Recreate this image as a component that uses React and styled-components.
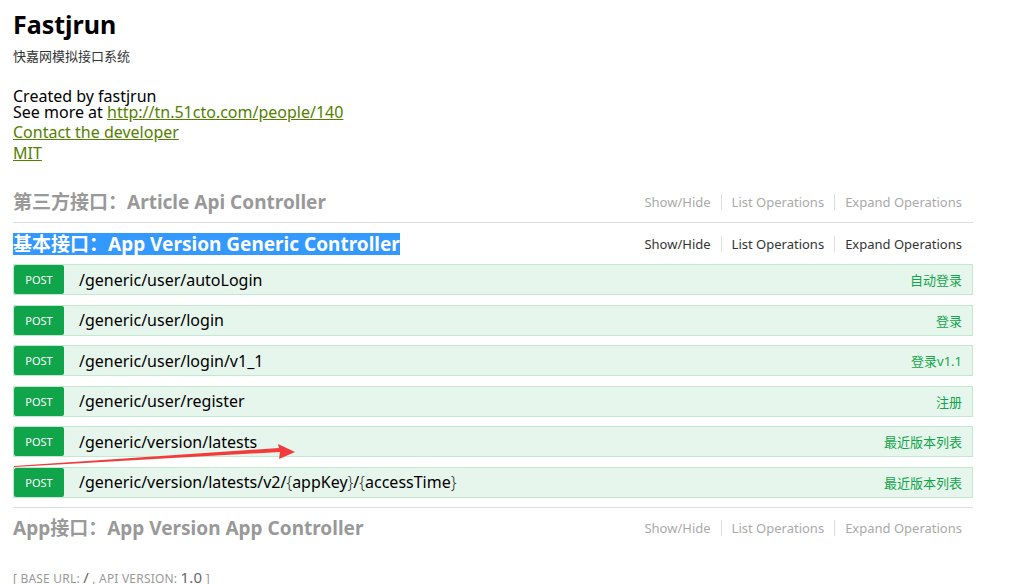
import styled, { createGlobalStyle } from "styled-components";

const GlobalStyle = createGlobalStyle`
    body {
        margin: 0;
        background: #fff;
        font-family: "Noto Sans", "Noto Sans CJK SC", sans-serif;
        color: #000;
    }
`;

const Page = styled.div`
    position: relative;
    width: 960px;
    padding: 6px 0 0 13px;
`;

const Title = styled.h1`
    margin: 0;
    font-size: 25px;
    line-height: 36px;
    font-weight: 700;
`;

const Subtitle = styled.div`
    font-size: 13px;
    line-height: 18px;
    color: #333;
    margin-top: 5px;
`;

const Info = styled.div`
    margin-top: 23px;
    font-size: 16px;
    line-height: 16px;
`;

const Link = styled.a`
    display: block;
    color: #547f00;
    text-decoration: underline;
    font-size: 16px;
    line-height: 21px;
    ${(p) => p.$inline && "display: inline; line-height: 16px;"}
    ${(p) => p.$first && "margin-top: 2px;"}
`;

const Section = styled.div`
    margin-top: ${(p) => p.$top || 0}px;
    border-bottom: ${(p) => (p.$open ? "none" : "1px solid #ddd")};
`;

const Heading = styled.div`
    display: flex;
    align-items: center;
    justify-content: space-between;
    height: 41px;
`;

const HeadingText = styled.span`
    font-size: 19px;
    font-weight: 700;
    color: ${(p) => (p.$selected ? "#fff" : "#999")};
    background: ${(p) => (p.$selected ? "#3399ff" : "transparent")};
    line-height: 22px;
`;

const Ops = styled.div`
    display: flex;
    align-items: center;
    padding-right: 11px;
    font-size: 13px;
    color: ${(p) => (p.$dark ? "#333" : "#aaa")};
`;

const Op = styled.span`
    padding: 0 10px;
    border-left: 1px solid #ddd;
    line-height: 16px;
    &:first-child {
        border-left: none;
        padding-left: 0;
    }
    &:last-child {
        padding-right: 0;
    }
`;

const OpList = styled.div`
    display: flex;
    flex-direction: column;
    gap: 9.5px;
    padding-bottom: 9px;
    border-bottom: 1px solid #ddd;
`;

const Row = styled.div`
    display: flex;
    align-items: center;
    height: 31px;
    background: #e7f6ec;
    border: 1px solid #c3e8d1;
    box-sizing: border-box;
    width: 960px;
`;

const Badge = styled.span`
    width: 50px;
    height: 29px;
    background: #10a54a;
    color: #fff;
    border-radius: 2px;
    font-size: 11px;
    display: flex;
    align-items: center;
    justify-content: center;
    flex-shrink: 0;
`;

const Path = styled.span`
    margin-left: 15px;
    font-size: 16px;
    flex: 1;
`;

const Brace = styled.span`
    font-weight: 300;
    color: #333;
`;

const Summary = styled.span`
    color: #10a54a;
    font-size: 13px;
    padding-right: 10px;
`;

const Footer = styled.div`
    margin-top: 18px;
    font-size: 12px;
    color: #999;
    letter-spacing: 0.2px;
`;

const Big = styled.span`
    font-size: 15px;
    color: #666;
`;

const Arrow = styled.svg`
    position: absolute;
    left: 0;
    top: 0;
    pointer-events: none;
`;

const ops = [
    { path: "/generic/user/autoLogin", summary: "自动登录" },
    { path: "/generic/user/login", summary: "登录" },
    { path: "/generic/user/login/v1_1", summary: "登录v1.1" },
    { path: "/generic/user/register", summary: "注册" },
    { path: "/generic/version/latests", summary: "最近版本列表" },
    {
        path: (
            <>
                /generic/version/latests/v2/<Brace>{"{"}</Brace>appKey
                <Brace>{"}"}</Brace>/<Brace>{"{"}</Brace>accessTime
                <Brace>{"}"}</Brace>
            </>
        ),
        summary: "最近版本列表",
    },
];

function Operations({ dark }) {
    return (
        <Ops $dark={dark}>
            <Op>Show/Hide</Op>
            <Op>List Operations</Op>
            <Op>Expand Operations</Op>
        </Ops>
    );
}

export default function App() {
    return (
        <Page>
            <GlobalStyle />
            <Title>Fastjrun</Title>
            <Subtitle>快嘉网模拟接口系统</Subtitle>
            <Info>
                <div>Created by fastjrun</div>
                <div>
                    See more at{" "}
                    <Link $inline href="#">
                        http://tn.51cto.com/people/140
                    </Link>
                </div>
            </Info>
            <Link $first href="#">
                Contact the developer
            </Link>
            <Link href="#">MIT</Link>

            <Section $top={17}>
                <Heading>
                    <HeadingText>第三方接口：Article Api Controller</HeadingText>
                    <Operations />
                </Heading>
            </Section>

            <Section $open>
                <Heading>
                    <HeadingText $selected>
                        基本接口：App Version Generic Controller
                    </HeadingText>
                    <Operations dark />
                </Heading>
                <OpList>
                    {ops.map((op, i) => (
                        <Row key={i}>
                            <Badge>POST</Badge>
                            <Path>{op.path}</Path>
                            <Summary>{op.summary}</Summary>
                        </Row>
                    ))}
                </OpList>
            </Section>

            <Section $open>
                <Heading>
                    <HeadingText>App接口：App Version App Controller</HeadingText>
                    <Operations />
                </Heading>
            </Section>

            <Footer>
                [ BASE URL: <Big>/</Big> , API VERSION: <Big>1.0</Big> ]
            </Footer>

            <Arrow width="1021" height="584">
                <polygon
                    points="14,466 279,448 278,444 295,452 279,459 280,452 14,467"
                    fill="#f23b3b"
                />
            </Arrow>
        </Page>
    );
}
